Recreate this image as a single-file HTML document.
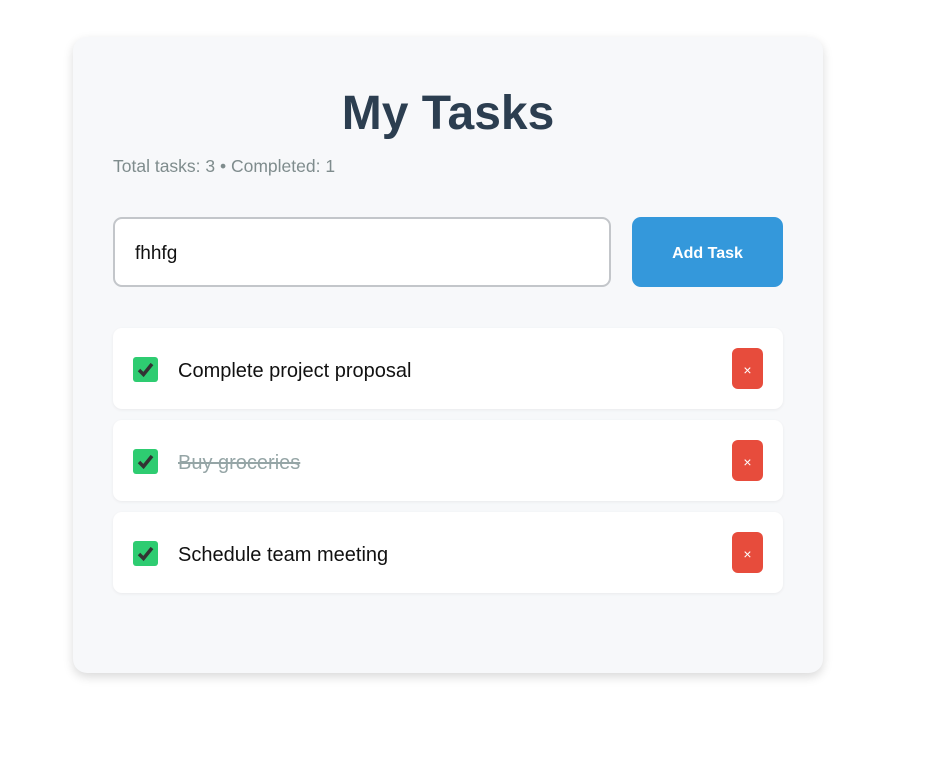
<!DOCTYPE html>
<html><head><style>
body{margin:0;background:#fff;font-family:"Liberation Sans",sans-serif;}
.card{position:absolute;left:73px;top:37px;width:750px;height:636px;background:#f7f8fa;border-radius:14px;box-shadow:0 4px 10px rgba(0,0,0,0.15);}
h1{position:absolute;left:0;width:750px;top:49px;margin:0;text-align:center;font-size:48px;line-height:56px;color:#2c3e50;font-weight:bold;}
.sub{position:absolute;left:40px;top:119px;font-size:17.5px;color:#7f8c8d;}
.inp{position:absolute;left:40px;top:180px;height:66px;border:2px solid #c3c6ca;border-radius:9px;background:#fff;font-size:19px;line-height:70px;padding-left:20px;width:474px;color:#111;}
.btn{position:absolute;left:559px;top:180px;width:151px;height:70px;background:#3498db;border-radius:9px;color:#fff;font-weight:bold;font-size:16px;text-align:center;line-height:74px;}
.item{position:absolute;left:40px;width:670px;height:81px;background:#fff;border-radius:9px;box-shadow:0 1px 3px rgba(0,0,0,0.06);}
.cb{position:absolute;left:20px;top:29px;width:25px;height:25px;background:#2ecc71;border-radius:3px;}
.t{position:absolute;left:65px;top:31px;font-size:20px;line-height:25px;color:#111;}
.done{color:#95a5a6;text-decoration:line-through;}
.x{position:absolute;left:619px;top:20px;width:31px;height:41px;background:#e74c3c;border-radius:6px;color:#fff;text-align:center;line-height:44px;font-size:14px;}
</style></head><body>
<div class="card">
<h1>My Tasks</h1>
<div class="sub">Total tasks: 3 • Completed: 1</div>
<div class="inp">fhhfg</div>
<div class="btn">Add Task</div>
<div class="item" style="top:291px"><div class="cb"><svg width="25" height="25"><path d="M6 13l4.5 4.5L19 7" stroke="#333" stroke-width="3.5" fill="none"/></svg></div><div class="t">Complete project proposal</div><div class="x">×</div></div>
<div class="item" style="top:383px"><div class="cb"><svg width="25" height="25"><path d="M6 13l4.5 4.5L19 7" stroke="#333" stroke-width="3.5" fill="none"/></svg></div><div class="t done">Buy groceries</div><div class="x">×</div></div>
<div class="item" style="top:475px"><div class="cb"><svg width="25" height="25"><path d="M6 13l4.5 4.5L19 7" stroke="#333" stroke-width="3.5" fill="none"/></svg></div><div class="t">Schedule team meeting</div><div class="x">×</div></div>
</div>
</body></html>
